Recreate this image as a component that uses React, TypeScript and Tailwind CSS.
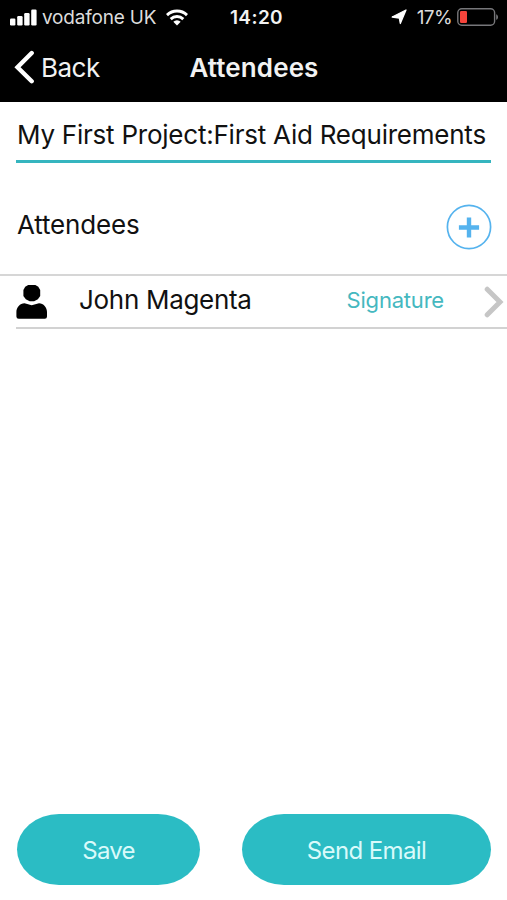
import React from "react";

function SignalBars() {
  return (
    <svg className="h-[17px] w-[27px] shrink-0" viewBox="0 0 27 17" fill="#fff">
      <rect x="0" y="9.5" width="5.4" height="7" rx="1.2" />
      <rect x="7.2" y="7" width="5.4" height="9.5" rx="1.2" />
      <rect x="14.2" y="4" width="5.4" height="12.5" rx="1.2" />
      <rect x="21.2" y="0.5" width="5.4" height="16" rx="1.2" />
    </svg>
  );
}

function Wifi() {
  return (
    <svg className="h-[17px] w-[22px] shrink-0" viewBox="0 0 22 17" fill="none" stroke="#fff" strokeWidth="2.9">
      <path d="M1 6.1a14.3 14.3 0 0 1 20 0" />
      <path d="M4.7 10.1a9 9 0 0 1 12.6 0" />
      <path d="M11 16.5 7.3 12.8a5.3 5.3 0 0 1 7.4 0z" fill="#fff" stroke="none" />
    </svg>
  );
}

function Battery() {
  return (
    <svg className="h-[18px] w-[42px] shrink-0" viewBox="0 0 42 18">
      <rect x="0.8" y="0.8" width="36.8" height="16.4" rx="4" fill="none" stroke="#77777a" strokeWidth="1.4" />
      <rect x="3" y="3" width="7" height="12" rx="1.2" fill="#f6443b" />
      <path d="M39.2 6.2c2.4.9 2.4 4.7 0 5.6z" fill="#77777a" />
    </svg>
  );
}

export default function App() {
  return (
    <div className="flex h-[900px] w-[507px] flex-col overflow-hidden bg-white font-['Inter','Liberation_Sans',sans-serif] text-[#111]">
      <header className="h-[102px] shrink-0 bg-black text-[#f2f2f2]">
        <div className="grid h-[34px] grid-cols-[1fr_auto_1fr] items-center pl-[10px] pr-[8px] text-[19px] whitespace-nowrap">
          <div className="flex items-center">
            <SignalBars />
            <span className="ml-[5px] w-[114px] pt-[2px] text-[#dcdcdc] tracking-[-0.2px]">vodafone UK</span>
            <span className="ml-[10px] flex"><Wifi /></span>
          </div>
          <span className="pl-[4px] pt-[2px] font-semibold tracking-[0.4px]">14:20</span>
          <div className="flex items-center justify-end">
            <svg className="mr-[10px] h-[16px] w-[16px]" viewBox="0 0 16 16" fill="#fff" stroke="#fff" strokeLinejoin="round">
              <path d="M15 1 9.300 14.500 8.300 9 1.200 8z" strokeWidth="1.300" />
            </svg>
            <span className="mr-[5px] pt-[2px] text-[#dcdcdc] tracking-[-0.6px]">17%</span>
            <Battery />
          </div>
        </div>
        <div className="grid h-[66px] grid-cols-[1fr_auto_1fr] items-center pl-[14px] pr-[13px] text-[26px]">
          <button className="flex items-center">
            <svg className="h-[34px] w-[21px]" viewBox="0 0 21 34" fill="none" stroke="#fff" strokeWidth="4.400" strokeLinecap="round" strokeLinejoin="miter">
              <path d="M17.700 3 3.500 17.200l14.200 14" />
            </svg>
            <span className="ml-[6px] tracking-[-0.5px]">Back</span>
          </button>
          <h1 className="font-semibold tracking-[0.1px]">Attendees</h1>
        </div>
      </header>

      <main className="flex flex-1 flex-col">
        <div className="mx-4 flex h-[61px] items-center border-b-[3px] border-[#35b5bf] pt-[6px] pl-px text-[26px] whitespace-nowrap">
          <span className="tracking-[-0.23px]">My First Project:First Aid Requirements</span>
        </div>
        <div className="flex h-[111px] items-center justify-between pr-[15px] pl-[17px] pt-[16px] text-[26px]">
          <h2 className="pb-[4px] tracking-[-0.15px]">Attendees</h2>
          <button>
            <svg className="h-[46px] w-[46px]" viewBox="0 0 46 46" fill="none" stroke="#55b3ee">
              <circle cx="23" cy="23" r="21.6" strokeWidth="1.7" />
              <path d="M23 15.600v15.800M15.100 23.500h15.800" strokeWidth="4.400" strokeLinecap="square" />
            </svg>
          </button>
        </div>
        <div className="border-t-2 border-[#d6d6d6]">
          <div className="ml-4 flex h-[53px] items-center border-b-2 border-[#d2d2d2] pr-[3px]">
            <svg className="h-[34px] w-[32px]" viewBox="0 0 32 34" fill="#000">
              <path d="M12.2 0h7.2l2.9 1.8 1.9 3.2v6l-2.3 3.2-3.8 2h-4.4l-3.9-2L7.4 11V5l1.8-3.2z" />
              <path d="M8.5 18.3 15.7 20.2 23 18.3c4.5.2 8 4 8 8.7v4.5q0 2.2-2.2 2.2H2.7Q.4 33.700.4 31.500V27c0-4.700 3.600-8.500 8.100-8.700z" />
            </svg>
            <span className="ml-[31px] pb-[4px] text-[26px] tracking-[-0.3px]">John Magenta</span>
            <span className="ml-auto pb-[3px] text-[22px] tracking-[-0.2px] text-[#45b8bf]">Signature</span>
            <svg className="ml-[40px] h-[32px] w-[20px]" viewBox="0 0 20 32" fill="none" stroke="#c6c6c6" strokeWidth="5" strokeLinejoin="miter">
              <path d="M3.200 3.200 16 16 3.200 28.800" strokeLinecap="round" />
            </svg>
          </div>
        </div>
        <div className="mt-auto mb-[15px] flex gap-[42px] pr-4 pl-[17px] text-[24px] text-[#d9fafa]">
          <button className="h-[71px] w-[183px] rounded-[42px/35.5px] bg-[#2bbcc4] pt-[2px] tracking-[-0.8px]">Save</button>
          <button className="h-[71px] w-[249px] rounded-[42px/35.5px] bg-[#2bbcc4] pt-[2px] tracking-[-0.6px]">Send Email</button>
        </div>
      </main>
    </div>
  );
}
